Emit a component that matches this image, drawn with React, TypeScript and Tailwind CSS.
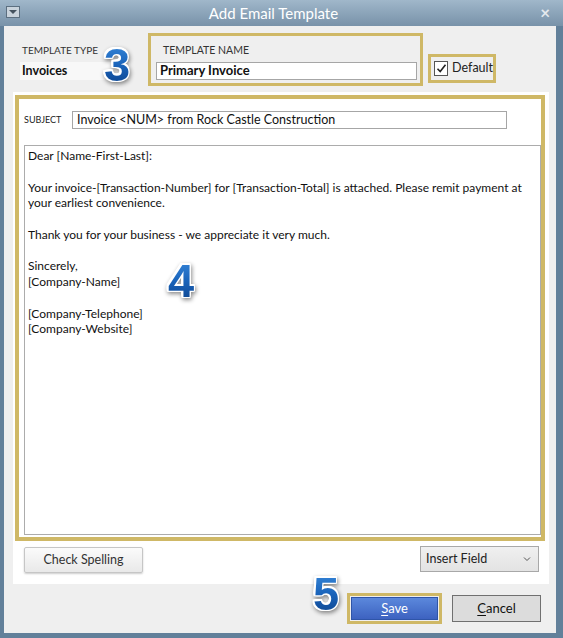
import React from 'react'

const ui = { fontFamily: 'Lato, "Noto Sans", sans-serif' }

function BigDigit({ children, className }: { children: React.ReactNode; className: string }) {
  return (
    <span
      className={`pointer-events-none absolute select-none text-[47px] leading-none font-black ${className}`}
      style={{
        fontFamily: '"Liberation Sans", Arial, sans-serif',
        filter:
          'drop-shadow(1.5px 0 0 #fff) drop-shadow(-1.5px 0 0 #fff) drop-shadow(0 1.5px 0 #fff) drop-shadow(0 -1.5px 0 #fff) drop-shadow(1px 2px 2px rgba(0,0,0,0.45))',
      }}
    >
      <span className="bg-gradient-to-b from-[#3d8fe0] via-[#1a64bb] to-[#0b3f86] bg-clip-text text-transparent">
        {children}
      </span>
    </span>
  )
}

const bodyLines = [
  'Dear [Name-First-Last]:',
  '',
  'Your invoice-[Transaction-Number] for [Transaction-Total] is attached. Please remit payment at',
  'your earliest convenience.',
  '',
  'Thank you for your business - we appreciate it very much.',
  '',
  'Sincerely,',
  '[Company-Name]',
  '',
  '[Company-Telephone]',
  '[Company-Website]',
]

export default function App() {
  return (
    <div className="relative h-[638px] w-[563px] overflow-hidden bg-[#62809a]" style={ui}>
      {/* title bar */}
      <div className="relative flex h-[26px] items-center justify-center bg-gradient-to-b from-[#a0b7ca] to-[#7892a9] pr-[16px]">
        <div className="absolute left-[6px] top-[6px] flex h-[12px] w-[14px] items-center justify-center border border-[#5c6f80] bg-[#c9d3dc]">
          <div className="h-0 w-0 border-x-[4px] border-t-[4px] border-x-transparent border-t-[#44525f]" />
        </div>
        <span className="text-[15px] text-white">Add Email Template</span>
        <span className="absolute right-[13px] top-[3px] text-[17px] font-bold leading-[20px] text-[#e4e9ee]">×</span>
      </div>

      {/* client area */}
      <div className="relative ml-[4px] flex h-[607px] w-[552px] flex-col bg-[#efefef]">
        {/* header */}
        <div className="flex h-[66px] items-start">
          <div className="ml-[16px] mt-[18px] w-[128px]">
            <div className="pl-[2px] text-[10px] leading-[12px] text-[#333]">TEMPLATE TYPE</div>
            <div className="mt-[6px] flex h-[18px] w-[110px] items-center bg-[#f8f8f8] pl-[2px] text-[12.5px] font-bold text-[#111]">
              Invoices
            </div>
          </div>
          <div className="mt-[7px] flex h-[53px] w-[275px] flex-col border-[3px] border-[#cfb866] px-[5px]">
            <div className="mt-[8px] pl-[7px] text-[10.5px] leading-[12px] text-[#333]">TEMPLATE NAME</div>
            <div className="mt-[6px] flex h-[18px] w-[261px] items-center border border-[#a6a6a6] bg-white pl-[3px] text-[13px] font-bold text-[#111]">
              Primary Invoice
            </div>
          </div>
          <div className="ml-[5px] mt-[28px] flex h-[29px] w-[68px] items-center border-[3px] border-[#cfb866] pl-[3px]">
            <div className="flex h-[15px] w-[15px] items-center justify-center border border-[#555] bg-white">
              <svg width="11" height="11" viewBox="0 0 11 11">
                <path d="M1.5 5.8 L4.2 8.5 L9.5 1.8" fill="none" stroke="#222" strokeWidth="1.6" />
              </svg>
            </div>
            <span className="ml-[4px] text-[12.5px] text-[#222]">Default</span>
          </div>
        </div>

        {/* white panel */}
        <div className="ml-[9px] flex h-[492px] w-[536px] flex-col bg-white">
          <div className="ml-[2px] mt-[3px] flex h-[446px] w-[530px] flex-col border-[4px] border-[#cfb866]">
            <div className="mt-[12px] flex items-center">
              <span className="ml-[5px] w-[48px] text-[9px] text-[#222]">SUBJECT</span>
              <div className="flex h-[18px] w-[435px] items-center border border-[#a6a6a6] pl-[4px] text-[12.5px] text-[#111]">
                Invoice &lt;NUM&gt; from Rock Castle Construction
              </div>
            </div>
            <div className="mb-[2px] ml-[5px] mt-[16px] flex-1 border border-[#acacac] px-[3px] pt-[2px] text-[12px] leading-[15.75px] text-[#111]">
              {bodyLines.map((line, i) => (
                <div key={i} className="h-[15.75px] whitespace-nowrap">
                  {line}
                </div>
              ))}
            </div>
          </div>
          <div className="mt-[5px] flex items-start justify-between pl-[11px] pr-[10px]">
            <button
              type="button"
              className="mt-[1px] flex h-[26px] w-[119px] items-center justify-center rounded-[2px] border border-[#c6c6c6] bg-gradient-to-b from-[#fbfbfb] to-[#e9e9e9] text-[12.5px] text-[#333] shadow-[0_1px_2px_rgba(0,0,0,0.2)]"
            >
              Check Spelling
            </button>
            <div className="flex h-[26px] w-[119px] items-center justify-between border border-[#a8a8a8] bg-gradient-to-b from-[#f0f0f0] to-[#e3e3e3] pl-[5px] pr-[7px] text-[12.5px] text-[#222]">
              <span>Insert Field</span>
              <svg width="8" height="6" viewBox="0 0 8 6">
                <path d="M1 1.5 L4 4.5 L7 1.5" fill="none" stroke="#555" strokeWidth="1" />
              </svg>
            </div>
          </div>
        </div>

        {/* footer buttons */}
        <div className="mt-[9px] flex items-start justify-end pr-[15px]">
          <div className="flex h-[31px] w-[95px] items-center justify-center border-[3px] border-[#cfb866]">
            <button
              type="button"
              className="h-[23px] w-[87px] border border-[#2f55a8] bg-gradient-to-b from-[#5b88dc] to-[#3d62c0] text-[13px] text-white"
            >
              <span className="underline underline-offset-2">S</span>ave
            </button>
          </div>
          <button
            type="button"
            className="ml-[10px] mt-[2px] h-[27px] w-[89px] border border-[#707070] bg-[#dcdcdc] text-[13px] text-[#111]"
          >
            <span className="underline underline-offset-2">C</span>ancel
          </button>
        </div>

        <BigDigit className="left-[100px] top-[15px]">3</BigDigit>
        <BigDigit className="left-[164px] top-[231px]">4</BigDigit>
        <BigDigit className="left-[309px] top-[544px]">5</BigDigit>
      </div>
    </div>
  )
}
